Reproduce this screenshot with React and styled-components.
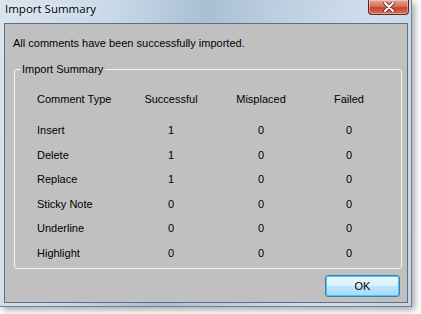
import React from 'react'
import styled, {createGlobalStyle} from 'styled-components'

const GlobalStyle = createGlobalStyle`
    body {
        margin: 0;
        background: #ffffff;
        font-family: "Liberation Sans", Arial, sans-serif;
    }
`

const Page = styled.div`
    width: 421px;
    height: 314px;
    overflow: hidden;
    background: #ffffff;
`

const Window = styled.div`
    width: 412px;
    height: 307px;
    box-sizing: border-box;
    padding: 0 3px 3px 4px;
    display: flex;
    flex-direction: column;
    background: linear-gradient(100deg, #d9e4ef 0%, #c8d8e8 25%, #a9bfd4 45%, #bccfe0 60%, #d0dded 80%, #c4d5e6 100%);
    box-shadow: 3px 3px 7px rgba(0, 0, 0, 0.35);
    border-right: 1px solid #6f8196;
    border-bottom: 1px solid #6f8196;
`

const TitleBar = styled.div`
    height: 23px;
    display: flex;
    align-items: flex-start;
    justify-content: space-between;
`

const Title = styled.span`
    font-family: "Open Sans", "Noto Sans", sans-serif;
    font-size: 11.5px;
    line-height: 12px;
    padding: 3px 0 0 1px;
    color: #000;
    text-shadow: 0 0 6px rgba(255, 255, 255, 0.9);
`

const CloseButton = styled.div`
    width: 41px;
    height: 15px;
    margin-right: -1px;
    box-sizing: border-box;
    border: 1px solid #5b2a22;
    border-top: none;
    border-radius: 0 0 4px 4px;
    background: linear-gradient(#e8a593 0%, #d7715a 45%, #c4452b 55%, #d7735a 100%);
    display: flex;
    align-items: center;
    justify-content: center;
    box-shadow: inset 0 0 0 1px rgba(255, 255, 255, 0.35);
`

const Body = styled.div`
    flex: 1;
    background: #c0c0c0;
    border: 1px solid #5f6e80;
    display: flex;
    flex-direction: column;
    padding: 0 0 0 8px;
`

const Message = styled.p`
    margin: 13px 0 0 0;
    font-size: 11px;
    line-height: 13px;
    color: #000;
`

const GroupBox = styled.fieldset`
    margin: 13px 0 0 1px;
    width: 388px;
    height: 206px;
    box-sizing: border-box;
    border: 1px solid #f4f4f4;
    border-radius: 3px;
    padding: 0 0 0 22px;
`

const Legend = styled.legend`
    font-size: 11px;
    color: #000;
    padding: 0 2px 0 1px;
    margin-left: -16px;
`

const Grid = styled.div`
    display: grid;
    grid-template-columns: 89px 90px 90px 86px;
    grid-template-rows: 39px repeat(6, 24.5px);
    margin-top: 4px;
`

const Cell = styled.div`
    font-size: 11px;
    color: #000;
    display: flex;
    align-items: center;
    justify-content: ${props => (props.$label ? 'flex-start' : 'center')};
`

const Footer = styled.div`
    display: flex;
    justify-content: flex-end;
    padding: 6px 7px 0 0;
`

const OkButton = styled.button`
    width: 75px;
    height: 22px;
    box-sizing: border-box;
    border: 1px solid #3c7fb1;
    border-radius: 3px;
    background: linear-gradient(#eaf6fd 0%, #d9f0fc 50%, #bee6fd 51%, #a7d9f5 100%);
    box-shadow: inset 0 0 0 1px #48c6f7;
    font-family: "Liberation Sans", Arial, sans-serif;
    font-size: 11px;
    color: #000;
    padding: 0;
`

const rows = [
    ['Insert', 1, 0, 0],
    ['Delete', 1, 0, 0],
    ['Replace', 1, 0, 0],
    ['Sticky Note', 0, 0, 0],
    ['Underline', 0, 0, 0],
    ['Highlight', 0, 0, 0]
]

const headers = ['Comment Type', 'Successful', 'Misplaced', 'Failed']

const CloseIcon = () => (
    <svg width="12" height="10" viewBox="0 0 12 10">
        <path d="M2 1 L10 9 M10 1 L2 9" stroke="#5a1f14" strokeWidth="3.4" strokeLinecap="round" />
        <path d="M2 1 L10 9 M10 1 L2 9" stroke="#ffffff" strokeWidth="2" strokeLinecap="round" />
    </svg>
)

export default function App() {
    return (
        <Page>
            <GlobalStyle />
            <Window>
                <TitleBar>
                    <Title>Import Summary</Title>
                    <CloseButton>
                        <CloseIcon />
                    </CloseButton>
                </TitleBar>
                <Body>
                    <Message>All comments have been successfully imported.</Message>
                    <GroupBox>
                        <Legend>Import Summary</Legend>
                        <Grid>
                            {headers.map((h, i) => (
                                <Cell key={h} $label={i === 0}>{h}</Cell>
                            ))}
                            {rows.map(row => row.map((v, i) => (
                                <Cell key={row[0] + i} $label={i === 0}>{v}</Cell>
                            )))}
                        </Grid>
                    </GroupBox>
                    <Footer>
                        <OkButton>OK</OkButton>
                    </Footer>
                </Body>
            </Window>
        </Page>
    )
}
